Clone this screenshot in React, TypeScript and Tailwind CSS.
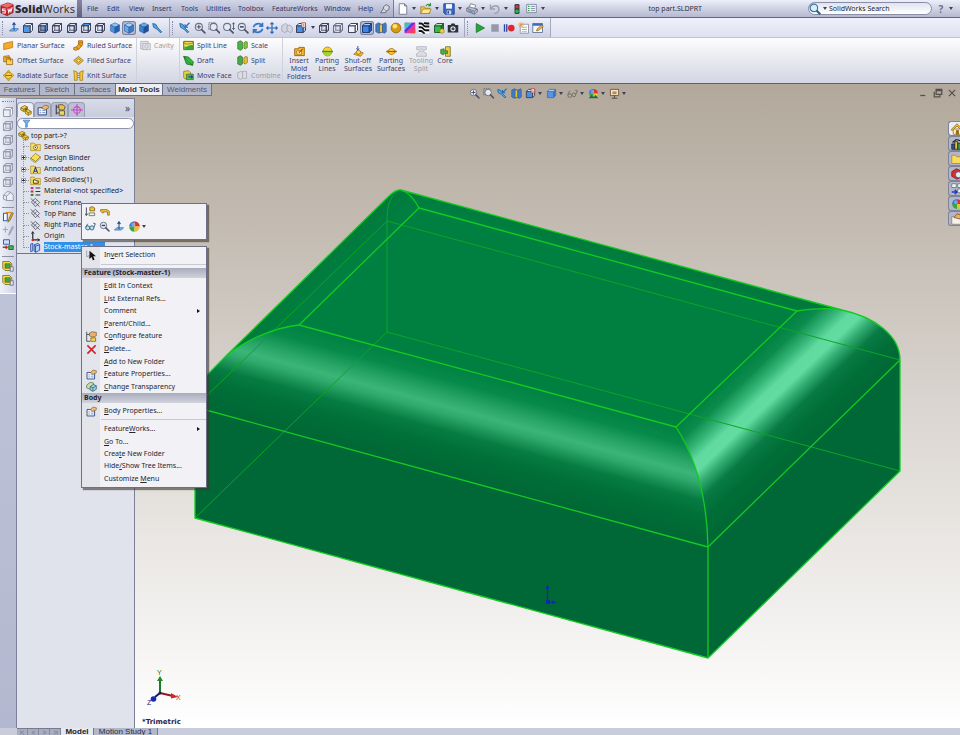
import { ReactNode } from 'react';
import clsx from 'clsx';

type CubeProps = {
  front?: string;
  top?: string;
  side?: string;
  stroke?: string;
  hidden?: boolean;
};

const Cube = ({ front = 'none', top = 'none', side = 'none', stroke = '#3b3f55', hidden }: CubeProps) => (
  <g stroke={stroke} strokeWidth="1.3" strokeLinejoin="round">
    <path d="M2 5h9v9H2z" fill={front} />
    <path d="M2 5l3-3h9l-3 3z" fill={top} />
    <path d="M11 5l3-3v9l-3 3z" fill={side} />
    {hidden && <path d="M5 2v9h9M5 11l-3 3" fill="none" strokeWidth="1" />}
  </g>
);

const IsoCube = ({ light = '#8cc4f5', mid = '#4f93dc', dark = '#2360b0' }) => (
  <g stroke="#27538f" strokeWidth="0.7" strokeLinejoin="round">
    <path d="M8 1l6 3-6 3-6-3z" fill={light} />
    <path d="M2 4l6 3v8l-6-3z" fill={mid} />
    <path d="M14 4L8 7v8l6-3z" fill={dark} />
  </g>
);

const Magnifier = ({ x = 6.5, children }: { x?: number; children?: ReactNode }) => (
  <g>
    <circle cx={x} cy="6.5" r="4.7" fill="#e6eaf2" stroke="#6c7386" strokeWidth="1.4" />
    <path d={`M${x + 3.5} 10l4.5 4.5`} stroke="#4b5266" strokeWidth="2.2" strokeLinecap="round" />
    {children}
  </g>
);

const Folder = () => (
  <path d="M1 3h5l1.500 2H15v9H1z" fill="#f7dc62" stroke="#a8871c" strokeWidth="1" />
);

const Ball = () => (
  <g>
    <path d="M8 8V1.500A6.500 6.500 0 0 0 1.500 8z" fill="#3570d8" />
    <path d="M8 8V1.500A6.500 6.500 0 0 1 14.500 8z" fill="#d8352e" />
    <path d="M8 8v6.500A6.500 6.500 0 0 1 1.500 8z" fill="#35a843" />
    <path d="M8 8v6.500A6.500 6.500 0 0 0 14.500 8z" fill="#e9c234" />
    <circle cx="6.500" cy="5.500" r="2.500" fill="#fff" opacity=".35" />
  </g>
);

const Card = () => (
  <g>
    <path d="M1.500 5h11v9.500h-11z" fill="#f4f6fb" stroke="#2f4a7c" strokeWidth="1.300" />
    <path d="M3.500 8.500h2M3.500 11.500h2M7 8.500h4M7 11.500h4" stroke="#4a74b8" />
    <path d="M6 5.500l4-4 5 1v3l-4 2z" fill="#edb87a" stroke="#7c4f22" strokeWidth=".8" />
  </g>
);

const Part = () => (
  <g stroke="#6b5410" strokeWidth=".9" strokeLinejoin="round">
    <path d="M1 5l5-3 4 2v3l5 3v3l-4 2-4-2.500V9L5 10 1 8z" fill="#f5d13d" />
    <path d="M1 5l4 2v3M5 7l5-3M10 7l-3 2 4 2.500V15M11 11.500l4-1.500" fill="none" />
    <ellipse cx="8" cy="7" rx="1.500" ry="1" fill="#6b5410" />
  </g>
);

const Plane = () => (
  <g fill="none" stroke="#474b5c" strokeWidth="1.100">
    <path d="M2 7l6-5 6 6-6 6z" />
    <path d="M1 2l13 12M5 10l5-5" />
  </g>
);

const Wrench = () => (
  <path d="M1 2l4 1 3 5 5 5-1.500 1.500-5-5L2 7z" fill="#4ca6e8" stroke="#235788" strokeWidth="1" />
);

const NormalTo = () => (
  <g>
    <path d="M2 12l3-3h9l-3 3z" fill="#8cc2f2" stroke="#2f67a8" />
    <path d="M8 11V2M6 4l2-3 2 3" fill="none" stroke="#1c4d94" strokeWidth="1.400" />
  </g>
);

const MoldPart = ({ color, accent }: { color: string; accent: string }) => (
  <g stroke="#4a4a18" strokeWidth=".8" strokeLinejoin="round">
    <path d="M1 3l4-2 3 2v10l-3 2-4-2z" fill={color} />
    <path d="M10 4l3-2 2 1v8l-3 2-2-1z" fill={accent} />
  </g>
);

const icons: Record<string, ReactNode> = {
  pin: (
    <g fill="#d7dae4" stroke="#585d72" strokeWidth="1.300">
      <path d="M6 4l4-3 5 3-1 5-4 2-5-3z" />
      <path d="M5 8l-4 6h8l1-3" />
    </g>
  ),
  newDoc: <path d="M3 1h7l3 3v11H3zM10 1v3h3" fill="#fff" stroke="#5e6478" strokeWidth="1" />,
  open: (
    <g stroke="#9a7413" strokeWidth=".9">
      <path d="M1 5h5l1 2h6v7H1z" fill="#f3c947" />
      <path d="M1 14l3-6h11l-3 6z" fill="#ffe792" />
      <path d="M8 4c2-3 4-3 6-1M14 0v3.500h-3" fill="none" stroke="#2c9b35" strokeWidth="1.500" />
    </g>
  ),
  save: (
    <g>
      <path d="M1 1h14v14H3l-2-2z" fill="#3567c9" stroke="#1c3c85" />
      <path d="M4 1.500h8v6H4z" fill="#f5f7fc" />
      <path d="M5 10h6v5H5z" fill="#cfd6e6" />
      <path d="M6 11h2v3H6z" fill="#1c3c85" />
    </g>
  ),
  print: (
    <g stroke="#555b6c" strokeWidth=".9">
      <path d="M4 7l2-6 7 2-2 5z" fill="#fff" />
      <path d="M1 7l3-2 11 3v4l-4 3-10-4z" fill="#bcc1cf" />
      <path d="M1 7l10 4v4M11 11l4-3" fill="none" />
      <path d="M3 10l6 2.500" stroke="#4f86c7" strokeWidth="1.500" />
    </g>
  ),
  undo: <path d="M2 2v6h6M2.500 7.500C5 3 12 2 13 7s-3 7-6 7" fill="none" stroke="#9da1b1" strokeWidth="2" />,
  light: (
    <g>
      <rect x="4" y="0" width="8" height="16" rx="2" fill="#3d4148" />
      <circle cx="8" cy="4" r="2.500" fill="#e0352a" />
      <circle cx="8" cy="11.500" r="2.700" fill="#27bd3c" />
    </g>
  ),
  options: (
    <g>
      <path d="M1 2h14v12H1z" fill="#eef3f8" stroke="#5d6f86" />
      <path d="M3 5h2M3 8h2M3 11h2" stroke="#2b9b44" strokeWidth="1.800" />
      <path d="M7 5h6M7 8h6M7 11h6" stroke="#5d6f86" />
    </g>
  ),
  normalTo: <NormalTo />,
  front: <Cube front="#4c98ec" top="#f4f7fc" side="#f4f7fc" />,
  back: <Cube top="#d7dce8" side="#5b87c3" front="#7d9cc9" hidden />,
  left: <Cube side="#f4f7fc" hidden />,
  right: <Cube side="#6eaef0" hidden />,
  top: <Cube top="#4c98ec" hidden />,
  bottom: <Cube front="#e3ebf8" hidden />,
  iso: <IsoCube />,
  trimetric: <IsoCube light="#a7d4fb" mid="#6aa9e8" dark="#397cc8" />,
  dimetric: <IsoCube light="#68aae8" mid="#3e7fca" dark="#1d5096" />,
  wrench: <Wrench />,
  prevView: (
    <g>
      <Wrench />
      <path d="M14 1L8 7M8 3v4h4" stroke="#2a67b0" strokeWidth="1.500" fill="none" />
    </g>
  ),
  zoomFit: (
    <Magnifier>
      <path d="M6.500 3.500v6M3.500 6.500h6" stroke="#394052" strokeWidth="1.200" />
    </Magnifier>
  ),
  zoomArea: (
    <g>
      <path d="M1 1h9v9H1z" fill="none" stroke="#555b70" strokeDasharray="2 1" />
      <Magnifier x={7.5} />
    </g>
  ),
  zoomInOut: (
    <g>
      <Magnifier x={5.5} />
      <path d="M14 1v9M12.500 3L14 1l1.500 2M12.500 8l1.500 2 1.500-2" stroke="#3c4256" fill="none" />
    </g>
  ),
  zoomSel: (
    <Magnifier>
      <path d="M4 6.500h5" stroke="#3c4256" strokeWidth="2" />
    </Magnifier>
  ),
  rotate: (
    <g fill="none" stroke="#2f76c4" strokeWidth="2.200">
      <path d="M2 7c1-5 8-6 11-3M14 1v4.500H9.500" />
      <path d="M14 9c-1 5-8 6-11 3M2 15v-4.500h4.500" />
    </g>
  ),
  pan: (
    <path
      d="M8 1v14M1 8h14M6 3l2-2 2 2M6 13l2 2 2-2M3 6L1 8l2 2M13 6l2 2-2 2"
      fill="none"
      stroke="#2766b7"
      strokeWidth="1.500"
    />
  ),
  rollGray: (
    <g fill="#d3d6e0" stroke="#9a9eae">
      <path d="M1 5l5-3 3 2v8l-4 2-4-2z" />
      <path d="M8 5l4-1 3 3v6l-3 1-4-3z" />
    </g>
  ),
  orient: (
    <g>
      <Cube front="#4c8ee0" top="#e8eef8" side="#b9cdec" />
      <path d="M9 1h5v6H9z" fill="#fff" stroke="#a13d31" />
      <path d="M10.500 3h2M10.500 5h2" stroke="#c0392b" />
    </g>
  ),
  wire: <Cube hidden />,
  wireHidden: <Cube hidden stroke="#686d80" />,
  noHidden: <Cube front="#eef0f8" top="#fff" side="#fff" />,
  shadedEdges: <Cube front="#3f86e4" top="#a8d0f8" side="#245db2" stroke="#1b3c78" />,
  shaded: <Cube front="#5b94dd" top="#b9d6f6" side="#3f72bd" stroke="#4873ae" />,
  section: (
    <g stroke="#365074" strokeWidth=".8">
      <path d="M1 3l4-2 3 2v11l-3 1-4-2z" fill="#3b7dcc" />
      <path d="M6 3h4v11H6z" fill="#f1c12f" />
      <path d="M10 3l4-2 1 2v10l-2 2-3-1z" fill="#3b7dcc" />
    </g>
  ),
  gold: (
    <g>
      <circle cx="8" cy="8" r="6.500" fill="#d69a10" stroke="#8b5f07" />
      <circle cx="6.500" cy="5.500" r="3" fill="#ffe27a" />
    </g>
  ),
  rainbow: (
    <g>
      <path d="M1 1h14v14H1z" fill="#e9369f" />
      <path d="M1 1h10L1 11z" fill="#2ec2ee" />
      <path d="M11 1h4L1 15v-4z" fill="#4a3be0" />
      <path d="M1 1h5L1 6z" fill="#36d35b" />
      <path d="M15 9v6H9z" fill="#f04a33" />
    </g>
  ),
  zebra: (
    <g>
      <path d="M1 1h14v14H1z" fill="#fff" />
      <path
        d="M1 2h3c3 0 3 4 6 4h5M1 7h3c3 0 3 4 6 4h5M8 1c1 1 2 1 7 1M1 12h3c2 0 3 3 5 3"
        fill="none"
        stroke="#111"
        strokeWidth="2.400"
      />
    </g>
  ),
  realView: (
    <g>
      <Cube front="#3fb64b" top="#b0e7b2" side="#1f8230" stroke="#205d2b" />
      <circle cx="12" cy="12" r="3" fill="#f3d03e" stroke="#8b7315" strokeWidth=".8" />
    </g>
  ),
  camera: (
    <g>
      <path d="M1 4h4l1-2h4l1 2h4v10H1z" fill="#2f3238" />
      <circle cx="8" cy="9" r="3.500" fill="#dfe4ec" />
      <circle cx="8" cy="9" r="2" fill="#454b57" />
    </g>
  ),
  play: <path d="M3 2l11 6-11 6z" fill="#27a53a" stroke="#12701f" />,
  stop: <path d="M3 3h10v10H3z" fill="#9599a8" />,
  record: (
    <g>
      <path d="M2 3v10M5 3v10" stroke="#2849a5" strokeWidth="1.800" />
      <circle cx="11" cy="8" r="4.500" fill="#e3262a" />
    </g>
  ),
  newMacro: (
    <g>
      <path d="M3 3h11v12H3z" fill="#fff" stroke="#7a8295" />
      <path d="M5 7h7M5 10h7M5 13h7" stroke="#8c95a8" />
      <path d="M4 0v8M0 4h8M1 1l6 6M7 1L1 7" stroke="#ef9d24" strokeWidth="1" />
    </g>
  ),
  editMacro: (
    <g>
      <path d="M1 2h13v12H1z" fill="#f5f7fb" stroke="#49608a" />
      <path d="M1 2h13v3H1z" fill="#3d6cc0" />
      <path d="M6 12l1-3 6-5 2 2-6 5z" fill="#f0bb41" stroke="#6d5218" strokeWidth=".8" />
    </g>
  ),
  planar: <path d="M1 5l13-3v9L1 14z" fill="#f7a928" stroke="#b56e0b" />,
  offset: (
    <g stroke="#8c5606">
      <path d="M1 2l8-1v8l-8 1z" fill="#f5b338" />
      <path d="M5 6h9v8H5z" fill="#ffd34f" />
      <path d="M3 4l8 0v5" fill="none" />
    </g>
  ),
  radiate: (
    <g stroke="#a9790c" strokeWidth=".8">
      <path d="M8 0l3 4H5zM8 16l3-4H5zM0 8l4-3v6zM16 8l-4-3v6z" fill="#f2b32c" />
      <circle cx="8" cy="8" r="4.500" fill="#fbd33e" />
      <path d="M3.500 8h9" stroke="#c25b12" strokeWidth="1.500" />
    </g>
  ),
  ruled: <path d="M1 11l4-1 3-4V1h6v6l-5 6-5 2-3-1zM5 10l3 4M8 6l5 3M8 4h6" fill="#f5a31e" stroke="#985709" />,
  filled: (
    <g stroke="#7d5a0c">
      <path d="M1 8l7-6 7 6-7 6z" fill="#f6c032" />
      <path d="M5 8l3-2.500L11 8l-3 2.500z" fill="#fff0a0" />
    </g>
  ),
  knit: <path d="M1 1l5 2v12H2V7zM15 1l-5 2v12h4V7zM6 5h4M6 8h4M6 11h4" fill="#fbca35" stroke="#9c7209" />,
  cavity: (
    <g fill="#e3e4ea" stroke="#a4a6b0">
      <path d="M1 2h11v11H1z" />
      <path d="M4 5h11v9H4z" />
      <circle cx="9.500" cy="9.500" r="2.500" />
    </g>
  ),
  splitLine: (
    <g>
      <path d="M1 2h14v12H1z" fill="#f4dd4a" stroke="#6a6317" strokeWidth="1.400" />
      <path d="M2 9c4 3 8-4 13-1v5.500H2z" fill="#36a63b" />
      <path d="M1 4c4 3 8 2 14 0" fill="none" stroke="#6a6317" />
    </g>
  ),
  draft: <path d="M1 2l7 1 7 7-1 5-9-2zM1 2l5 6 8 7" fill="#35b83e" stroke="#176c20" strokeWidth="1.200" />,
  moveFace: (
    <g strokeWidth=".9">
      <path d="M1 2l7-1 3 3v8l-8 1-2-2z" fill="#f2d03c" stroke="#6e5f12" />
      <path d="M5 6h10v8H5z" fill="#4fba50" stroke="#1f6425" />
      <path d="M8 10h6M12 8l2 2-2 2" stroke="#1f3fa5" strokeWidth="1.500" fill="none" />
    </g>
  ),
  scale: <MoldPart color="#3dbb46" accent="#7ccd37" />,
  split: <MoldPart color="#3dae46" accent="#f0c42f" />,
  combine: (
    <g fill="#dadce3" stroke="#9fa2ad">
      <path d="M1 4l5-2 3 2v7l-4 3-4-3z" />
      <path d="M8 2h6v10H8z" />
    </g>
  ),
  moldFolder: (
    <g>
      <path d="M1 4h6V2h8v12H1z" fill="#f8b932" stroke="#9a6206" strokeWidth="1.300" />
      <path d="M4 7h7v5H4z" fill="#fff2ba" stroke="#9a6206" />
      <path d="M7 10l6-6" stroke="#a33c12" strokeWidth="1.500" />
    </g>
  ),
  partingLines: (
    <g>
      <circle cx="8" cy="8" r="6.500" fill="#f6d32f" stroke="#8c7c10" />
      <path d="M2 8a6 6 0 0 0 12 0z" fill="#a9d23a" />
      <path d="M0 8h16" stroke="#3c9c19" strokeWidth="2" />
    </g>
  ),
  shutOff: (
    <g stroke="#7c5a0c" strokeWidth=".9">
      <path d="M1 12l6-5 8 3-4 5z" fill="#f6b52f" />
      <circle cx="8" cy="9" r="3" fill="#ffd956" />
      <path d="M7 0v5M5 3.500L7 6l2-2.500" stroke="#2c449b" strokeWidth="1.300" fill="none" />
    </g>
  ),
  partingSurf: (
    <g stroke="#9a650c" strokeWidth=".9">
      <path d="M0 8l8-4 8 4-8 4z" fill="#f59f25" />
      <circle cx="8" cy="8" r="4.500" fill="#fbcf3c" />
      <path d="M2 8h12" stroke="#b4520d" strokeWidth="1.600" />
    </g>
  ),
  toolingSplit: (
    <g fill="#dcdde3" stroke="#a6a8b2">
      <path d="M1 1h14v4l-4 1-3-2-3 2-4-1z" />
      <path d="M1 15v-4l4-3 3-1 3 1 4 3v4z" />
    </g>
  ),
  core: (
    <g stroke="#4b5413" strokeWidth=".9">
      <path d="M8 1h7v14H8z" fill="#f4cb35" />
      <path d="M1 5l5-1v3h5v4H5v2l-4-2z" fill="#41b444" />
    </g>
  ),
  part: <Part />,
  card: <Card />,
  config: (
    <g>
      <path d="M3 1v13M3 4h4M3 12h4" stroke="#3d4250" strokeWidth="1.500" />
      <path d="M6 1h6l3 3-2 4H7z" fill="#eac14b" stroke="#3d3410" strokeWidth=".9" />
      <path d="M7 9h7v6H7z" fill="#efd56e" stroke="#3d3410" strokeWidth=".9" />
    </g>
  ),
  target: (
    <g fill="none" stroke="#c843c8" strokeWidth="1.400">
      <circle cx="8" cy="8" r="4.500" />
      <path d="M8 0v16M0 8h16" />
    </g>
  ),
  filter: <path d="M2 2h12L9.500 8v6l-3 1V8z" fill="#6bb7ee" stroke="#2366a6" />,
  sensors: (
    <g>
      <Folder />
      <circle cx="8" cy="9.500" r="3" fill="#fff6c8" stroke="#5c5226" />
      <circle cx="8" cy="9.500" r="1" fill="#4a4326" />
    </g>
  ),
  binder: (
    <g stroke="#7a640f" strokeWidth=".9">
      <path d="M1 9l7-7 7 5-7 7z" fill="#f8df4c" />
      <path d="M1 9v2l7 5 7-7V7l-7 7z" fill="#f8f8f2" />
    </g>
  ),
  annotations: (
    <g>
      <Folder />
      <path d="M5 13l3-8 3 8M6 10.500h4" fill="none" stroke="#1d3a94" strokeWidth="1.500" />
    </g>
  ),
  bodies: (
    <g>
      <Folder />
      <path d="M5 7h3l1 1.500h3V12H5z" fill="#fff3a8" stroke="#262310" strokeWidth="1.200" />
    </g>
  ),
  material: (
    <g strokeWidth="3">
      <path d="M1 3h4" stroke="#b632a2" />
      <path d="M1 8h4" stroke="#d32f2f" />
      <path d="M1 13h4" stroke="#2a8c3b" />
      <path d="M8 3h7M8 8h7M8 13h7" stroke="#30333f" strokeWidth="1.600" />
    </g>
  ),
  plane: <Plane />,
  origin: (
    <g fill="none" strokeWidth="1.700">
      <path d="M4 1v12h10" stroke="#26262e" />
      <path d="M2 4l2-3 2 3M11 11l3 2-3 2" stroke="#26262e" strokeWidth="1.200" />
      <circle cx="4" cy="13" r="1.800" fill="#d32323" stroke="none" />
    </g>
  ),
  stock: (
    <g fill="#b8d3f8" stroke="#1d45a0" strokeWidth="1.200">
      <path d="M1 3l3-1v11l-3 1z" />
      <path d="M6 4l6-2 2 2v8l-6 3-2-2z" />
      <path d="M8 6v9M8 6l6-2M8 6L6 4" fill="none" />
    </g>
  ),
  openPart: (
    <g>
      <path d="M2 2v11M0 11l2 3 2-3" stroke="#30343f" strokeWidth="1.200" fill="none" />
      <path d="M7 2l4-1 3 2v4H7z" fill="#f3c33a" stroke="#614a0c" />
      <path d="M6 10h8v4H6z" fill="#f4f1e6" stroke="#55513f" />
    </g>
  ),
  rollback: <path d="M1 4h10l4 3v6h-3V8H5v2L1 7z" fill="#f1bb33" stroke="#7c5c0f" />,
  glasses: (
    <g fill="#bfe3f1" stroke="#2b6278" strokeWidth="1.300">
      <circle cx="4" cy="10" r="3" />
      <circle cx="10" cy="10" r="3" />
      <path d="M1 9l3-5M13 9l2-5-3-1" fill="none" />
    </g>
  ),
  glassesGray: (
    <g fill="none" stroke="#6f6c6a" strokeWidth="1.300">
      <circle cx="4" cy="11" r="2.700" />
      <circle cx="10" cy="10" r="2.700" />
      <path d="M1 10l3-6M13 9l2-5-3-1" />
    </g>
  ),
  ball: <Ball />,
  scene: (
    <g>
      <Ball />
      <path d="M1 15l4-5 3 3 3-3 4 5z" fill="#2d6a34" />
    </g>
  ),
  viewSettings: (
    <g>
      <path d="M2 2h12v9H2z" fill="#f1e4c8" stroke="#6e5534" strokeWidth="1.300" />
      <path d="M5 5h6v4H5z" fill="#b98a55" />
      <path d="M8 11v4M4 15h8" stroke="#55504c" strokeWidth="1.500" />
    </g>
  ),
  cursor: (
    <g>
      <path d="M1 1v9l3-2 1 4" fill="none" stroke="#888b96" />
      <path d="M5 1v12l3-3 2 5 2.500-1-2-5h4z" fill="#111" />
    </g>
  ),
  remove: <path d="M2 2l12 12M14 2L2 14" stroke="#d6202a" strokeWidth="2.200" />,
  configure: (
    <g>
      <path d="M1 1v14h5M1 5h4" fill="none" stroke="#454955" strokeWidth="1.300" />
      <path d="M5 3l4-2 6 1v5l-5 2-5-2z" fill="#eab16e" stroke="#6e441b" strokeWidth=".9" />
      <path d="M7 10h7v5H7z" fill="#f4dc57" stroke="#5f5312" />
    </g>
  ),
  transparency: (
    <g strokeWidth="1.100">
      <path d="M1 6l5-4 5 1v6l-5 3-5-2z" fill="#cfdcae" stroke="#59733a" />
      <path d="M6 8l5-3 4 2v5l-5 3-4-2z" fill="#9cd2df" stroke="#2f6474" />
      <path d="M6 8l4 2v5M10 10l5-3" fill="none" stroke="#2f6474" />
    </g>
  ),
  house: (
    <g stroke="#8c6710" strokeWidth="1">
      <path d="M3 8h10v7H3z" fill="#fdf5c8" />
      <path d="M0 9l8-8 8 8-2 1-6-6-6 6z" fill="#f3bf37" />
      <path d="M7 10h3v5H7z" fill="#9d5a25" />
    </g>
  ),
  library: (
    <g>
      <path d="M1 8h4v7H1z" fill="#2e54a8" stroke="#171c2b" />
      <path d="M5 5h4v10H5z" fill="#e6c333" stroke="#171c2b" />
      <path d="M9 7h5v8H9z" fill="#3a9c4b" stroke="#171c2b" />
      <path d="M2 6l5-4 7 2" fill="none" stroke="#171c2b" strokeWidth="1.500" />
    </g>
  ),
  folder: <Folder />,
  search3d: (
    <g>
      <path d="M1 5l6-4 7 3v8l-6 3-7-4z" fill="#d5312f" stroke="#7e1515" />
      <circle cx="10" cy="9" r="4" fill="#e4ecf6" stroke="#49506a" />
    </g>
  ),
  palette: (
    <g>
      <path d="M1 1h6v5H1zM9 1h6v5H9zM9 8h6v5H9z" fill="#f2f5f8" stroke="#56705f" />
      <path d="M1 12h7M5 9l3 3-3 3" stroke="#1f3ac2" strokeWidth="1.800" fill="none" />
    </g>
  ),
  props: (
    <g>
      <path d="M1 5h13v10H1z" fill="#f5f3ec" stroke="#827a6d" />
      <path d="M4 6l4-5 6 2-2 5z" fill="#eab068" stroke="#7a4c1c" />
    </g>
  ),
  grayCube: <Cube front="#eceef5" top="#fff" side="#fff" stroke="#9699a9" />,
  grayWire: <Cube hidden stroke="#9699a9" />,
  grayPart: <path d="M2 7l5-5 5 1 3 4v7H6l-4-2zM6 14V8l6-5M6 8L2 7" fill="#eceef5" stroke="#9699a9" strokeWidth="1.300" />,
  sketch: (
    <g>
      <path d="M2 3h5v10H2z" fill="#fff" stroke="#3461b6" strokeWidth="1.400" />
      <path d="M8 15l1-4 4-9 2 1-4 9z" fill="#f2b32d" stroke="#805a10" />
      <path d="M5 2l7 0" stroke="#e08a1b" strokeWidth="1.500" />
    </g>
  ),
  pencilGray: <path d="M1 6h7M4.500 2v8M9 14l1-4 4-8 1 1-4 8z" fill="none" stroke="#a3a6b4" strokeWidth="1.400" />,
  mates: (
    <g strokeWidth="1.200">
      <path d="M2 1h8v6H2z" fill="#cfe2fa" stroke="#2950a4" />
      <path d="M1 11h6M5 9l2 2-2 2" fill="none" stroke="#c22d2d" strokeWidth="1.700" />
      <path d="M9 9h6v5H9z" fill="#44b54e" stroke="#1d6527" />
    </g>
  ),
  yellowBlock: (
    <g stroke="#6d6414" strokeWidth="1">
      <path d="M1 2h9l3 3v9H4l-3-3z" fill="#f2e04b" />
      <path d="M4 5h7v6H4z" fill="#3fa646" />
      <path d="M11 9h4v6h-4z" fill="#dfe2ee" stroke="#626880" />
    </g>
  ),
};

const Icon = ({ name, className = 'size-3' }: { name: string; className?: string }) => (
  <svg viewBox="0 0 16 16" className={clsx('shrink-0', className)} aria-hidden="true">
    {icons[name]}
  </svg>
);

const Caret = () => (
  <svg viewBox="0 0 4 3" className="h-[3px] w-1 shrink-0" aria-hidden="true">
    <path d="M0 0h4L2 3z" fill="#3c4258" />
  </svg>
);

// "&" marks the access key of a label
const Label = ({ text }: { text: string }) => {
  const at = text.indexOf('&');
  if (at < 0) return <span>{text}</span>;
  return (
    <span>
      {text.slice(0, at)}
      <u>{text[at + 1]}</u>
      {text.slice(at + 2)}
    </span>
  );
};

const menus = [
  { label: 'File', width: 'w-[20px]' },
  { label: 'Edit', width: 'w-[22px]' },
  { label: 'View', width: 'w-[23px]' },
  { label: 'Insert', width: 'w-[29px]' },
  { label: 'Tools', width: 'w-[25px]' },
  { label: 'Utilities', width: 'w-[32px]' },
  { label: 'Toolbox', width: 'w-[34px]' },
  { label: 'FeatureWorks', width: 'w-[52px]' },
  { label: 'Window', width: 'w-[34px]' },
  { label: 'Help', width: 'w-[22px]' },
];

const quickAccess = ['newDoc', 'open', 'save', 'print', 'undo'];

const viewTools = ['normalTo', 'front', 'back', 'left', 'right', 'top', 'bottom', 'iso', 'trimetric', 'dimetric', 'wrench'];
const zoomTools = ['prevView', 'zoomFit', 'zoomArea', 'zoomInOut', 'zoomSel', 'rotate', 'pan', 'rollGray', 'orient'];
const displayTools = ['wire', 'wireHidden', 'noHidden', 'shadedEdges', 'section', 'gold', 'rainbow', 'zebra', 'realView', 'camera'];
const macroTools = ['play', 'stop', 'record', 'newMacro', 'editMacro'];

const ribbonColumns = [
  {
    width: 'w-[67px]',
    items: [
      { icon: 'planar', label: 'Planar Surface' },
      { icon: 'offset', label: 'Offset Surface' },
      { icon: 'radiate', label: 'Radiate Surface' },
    ],
  },
  {
    width: 'w-[64px]',
    divider: true,
    items: [
      { icon: 'ruled', label: 'Ruled Surface' },
      { icon: 'filled', label: 'Filled Surface' },
      { icon: 'knit', label: 'Knit Surface' },
    ],
  },
  { width: 'w-[40px]', divider: true, items: [{ icon: 'cavity', label: 'Cavity', disabled: true }] },
  {
    width: 'w-[51px]',
    items: [
      { icon: 'splitLine', label: 'Split Line' },
      { icon: 'draft', label: 'Draft' },
      { icon: 'moveFace', label: 'Move Face' },
    ],
  },
  {
    width: 'w-[46px]',
    divider: true,
    items: [
      { icon: 'scale', label: 'Scale' },
      { icon: 'split', label: 'Split' },
      { icon: 'combine', label: 'Combine', disabled: true },
    ],
  },
];

const moldTools = [
  { icon: 'moldFolder', label: 'Insert Mold Folders', width: 'w-[26px]' },
  { icon: 'partingLines', label: 'Parting Lines', width: 'w-[28px]' },
  { icon: 'shutOff', label: 'Shut-off Surfaces', width: 'w-[32px]' },
  { icon: 'partingSurf', label: 'Parting Surfaces', width: 'w-[32px]' },
  { icon: 'toolingSplit', label: 'Tooling Split', width: 'w-[26px]', disabled: true },
  { icon: 'core', label: 'Core', width: 'w-[20px]' },
];

const tabs = [
  { label: 'Features', width: 'w-[40px]' },
  { label: 'Sketch', width: 'w-[35px]' },
  { label: 'Surfaces', width: 'w-[41px]' },
  { label: 'Mold Tools', width: 'w-[47px]', active: true },
  { label: 'Weldments', width: 'w-[49px]' },
];

const sideTools = [
  ['grayCube', 'grayWire', 'grayWire', 'grayWire', 'grayWire', 'grayWire', 'grayPart'],
  ['sketch', 'pencilGray', 'mates'],
  ['yellowBlock', 'yellowBlock'],
];

const tree = [
  { icon: 'sensors', label: 'Sensors' },
  { icon: 'binder', label: 'Design Binder', expandable: true },
  { icon: 'annotations', label: 'Annotations', expandable: true },
  { icon: 'bodies', label: 'Solid Bodies(1)', expandable: true },
  { icon: 'material', label: 'Material <not specified>' },
  { icon: 'plane', label: 'Front Plane' },
  { icon: 'plane', label: 'Top Plane' },
  { icon: 'plane', label: 'Right Plane' },
  { icon: 'origin', label: 'Origin' },
  { icon: 'stock', label: 'Stock-master-1', selected: true },
];

const headsUp = [
  { icon: 'zoomFit' },
  { icon: 'zoomArea' },
  { icon: 'prevView' },
  { icon: 'section' },
  { icon: 'orient', menu: true },
  { icon: 'shaded', menu: true },
  { icon: 'glassesGray', menu: true },
  { icon: 'scene', menu: true },
  { icon: 'viewSettings', menu: true },
];

const taskPane = ['house', 'library', 'folder', 'search3d', 'palette', 'ball', 'props'];

type MenuEntry = { label: string; icon?: string; submenu?: boolean };

const featureMenu: MenuEntry[] = [
  { label: '&Edit In Context' },
  { label: '&List External Refs...' },
  { label: 'Comment', submenu: true },
  { label: '&Parent/Child...' },
  { label: 'C&onfigure feature', icon: 'configure' },
  { label: '&Delete...', icon: 'remove' },
  { label: '&Add to New Folder' },
  { label: '&Feature Properties...', icon: 'card' },
  { label: '&Change Transparency', icon: 'transparency' },
];

const viewMenu: MenuEntry[] = [
  { label: 'Feature&Works...', submenu: true },
  { label: '&Go To...' },
  { label: 'Crea&te New Folder' },
  { label: 'Hide&/Show Tree Items...' },
  { label: 'Customize &Menu' },
];

function TitleBar() {
  return (
    <header className="flex h-[18px] items-center border-b border-[#63667c] bg-linear-to-b from-[#eceefa] to-[#b5b9cf] text-[#35355f]">
      <div className="flex w-[77px] items-center gap-px">
        <svg viewBox="0 0 16 16" className="size-[14px] shrink-0" aria-hidden="true">
          <path d="M1 4l8-3 6 2v9l-7 3.500-7-3z" fill="#c5202a" stroke="#7d1018" strokeWidth=".8" />
          <path d="M1 4l7 2.500 7-3.500-6-2z" fill="#ec6a6e" />
          <path d="M6.500 8H3v2h3v2.500H2.500M9 7.500l1 4.500 1.500-4 1 3 1.500-5" fill="none" stroke="#fff" strokeWidth="1.200" />
        </svg>
        <span className="font-['Open_Sans'] text-[11px] leading-none text-[#2c2c34]">
          <b className="font-extrabold">Solid</b>Works
        </span>
      </div>
      <div className="h-full w-[5px] bg-linear-to-b from-[#8487a4] to-[#5d6080]" />
      <nav className="flex h-full w-[312px] items-center border-r border-[#777b94] bg-linear-to-b from-[#d3d6e8] to-[#a9adc8] pl-[5px]">
        {menus.map(menu => (
          <button key={menu.label} className={clsx('text-left', menu.width)}>
            {menu.label}
          </button>
        ))}
        <button aria-label="Pin menu">
          <Icon name="pin" className="size-[10px]" />
        </button>
      </nav>
      <div className="flex items-center pl-[3px]">
        {quickAccess.map(name => (
          <button key={name} aria-label={name} className="flex w-[23px] items-center gap-[3px]">
            <Icon name={name} />
            <Caret />
          </button>
        ))}
        <button aria-label="Rebuild" className="w-[14px]">
          <Icon name="light" className="size-[10px]" />
        </button>
        <button aria-label="Options" className="flex items-center gap-1">
          <Icon name="options" className="size-[11px]" />
          <Caret />
        </button>
      </div>
      <h1 className="ml-auto pr-[106px] text-[#33333f]">top part.SLDPRT</h1>
      <label className="flex h-[13px] w-[124px] items-center gap-[2px] rounded-full border border-[#8b8fa6] bg-linear-to-b from-[#e1e4f0] to-white">
        <svg viewBox="0 0 16 16" className="size-3 shrink-0" aria-hidden="true">
          <circle cx="6.500" cy="6.500" r="5" fill="#d8effa" stroke="#37799c" strokeWidth="1.600" />
          <path d="M10 10l5 5" stroke="#2c6486" strokeWidth="2.800" />
        </svg>
        <Caret />
        <input
          aria-label="SolidWorks Search"
          defaultValue="SolidWorks Search"
          className="w-full min-w-0 bg-transparent text-[#1f1f28] outline-none"
        />
      </label>
      <button className="flex w-7 items-center justify-center gap-1.5">
        <b className="text-[10px] leading-none text-[#6c7088]">?</b>
        <Caret />
      </button>
    </header>
  );
}

function ToolGroup({ names, width, pressed }: { names: string[]; width: string; pressed?: string }) {
  return (
    <div className={clsx('flex shrink-0 justify-between', width)}>
      {names.map(name => (
        <button
          key={name}
          aria-label={name}
          className={clsx(
            'flex size-[14px] items-center justify-center',
            name === pressed && 'rounded-[3px] bg-[#b4bad2] ring-1 ring-[#7c819b] ring-inset'
          )}
        >
          <Icon name={name} />
        </button>
      ))}
    </div>
  );
}

const Grip = () => <div className="mx-[2px] h-[14px] border-l border-dotted border-[#8387a0]" />;

function Toolbar() {
  return (
    <div className="flex h-5 border-b border-[#bfc2d0] bg-linear-to-b from-[#f0f0fc] to-[#dfe1f1]">
      <div className="flex w-[551px] items-center border-r border-[#a4a8bd] bg-linear-to-b from-[#eef0fb] to-[#cdd1e4]">
        <Grip />
        <div className="w-[2px]" />
        <ToolGroup names={viewTools} width="w-[158px]" pressed="trimetric" />
        <div className="ml-[4px] h-full w-px bg-[#a4a8bd]" />
        <Grip />
        <div className="w-[3px]" />
        <ToolGroup names={zoomTools} width="w-[130px]" />
        <div className="flex w-[9px] justify-center">
          <Caret />
        </div>
        <ToolGroup names={displayTools} width="w-[143px]" pressed="shadedEdges" />
        <div className="ml-[4px] h-full w-px bg-[#a4a8bd]" />
        <Grip />
        <div className="w-[3px]" />
        <ToolGroup names={macroTools} width="w-[72px]" />
      </div>
    </div>
  );
}

function Ribbon() {
  return (
    <div className="flex h-[46px] border-b border-[#5c5f77] bg-linear-to-b from-[#fdfdfe] to-[#d3d6e3] pl-[3px] text-[#41416e]">
      {ribbonColumns.map((column, i) => (
        <div
          key={i}
          className={clsx('mr-[3px] flex flex-col', column.width, column.divider && 'border-r border-[#cfd1dc]')}
        >
          {column.items.map(item => (
            <button
              key={item.label}
              className={clsx('flex h-[15px] items-center gap-[3px] whitespace-nowrap', item.disabled && 'text-[#9b9ca6]')}
            >
              <Icon name={item.icon} className="size-[11px]" />
              {item.label}
            </button>
          ))}
        </div>
      ))}
      <div className="flex gap-[1px]">
        {moldTools.map(tool => (
          <button
            key={tool.label}
            className={clsx(
              'flex flex-col items-center pt-[8px] text-center leading-[8px]',
              tool.width,
              tool.disabled && 'text-[#9b9ca6]'
            )}
          >
            <Icon name={tool.icon} className="size-[11px]" />
            {tool.label}
          </button>
        ))}
      </div>
    </div>
  );
}

function CommandTabs() {
  return (
    <div className="flex h-[14px] items-start font-['Liberation_Sans'] text-[8px] leading-none">
      {tabs.map(tab => (
        <button
          key={tab.label}
          className={clsx(
            'h-3 border-r border-b border-[#6c7088]',
            tab.width,
            tab.active ? 'bg-[#eceef4] font-bold text-[#30303a]' : 'bg-[#b3b7ca] text-[#55586a]'
          )}
        >
          {tab.label}
        </button>
      ))}
    </div>
  );
}

function SideStrip() {
  return (
    <aside className="w-4 shrink-0 bg-linear-to-b from-[#c3c8dc] to-[#b3b8d0]">
      <div className="flex h-[196px] flex-col items-center border-b border-white bg-linear-to-r from-[#eef0fa] to-[#ced2e4] pt-[3px]">
        <div className="h-[4px] w-3 border-t border-dotted border-[#7c8099]" />
        {sideTools.map((group, i) => (
          <div key={i} className={clsx('flex flex-col items-center', i > 0 && 'mt-1 border-t border-[#8c90a6] pt-[2px]')}>
            {group.map((name, j) => (
              <button key={j} aria-label={name} className="flex h-[14px] w-3 items-center justify-center">
                <Icon name={name} />
              </button>
            ))}
          </div>
        ))}
      </div>
    </aside>
  );
}

function FeatureTree() {
  return (
    <section className="flex w-[119px] shrink-0 flex-col border-x border-t border-[#7b7f97] bg-[#e0e3ec] text-[#1d1d26]">
      <div className="flex h-[18px] items-end bg-linear-to-b from-[#d9dce8] to-[#c8ccdc]">
        {['part', 'card', 'config', 'target'].map((name, i) => (
          <button
            key={name}
            aria-label={name}
            className={clsx(
              'flex h-[15px] w-[17px] items-center justify-center rounded-t-sm border border-b-0 border-[#9a9eb4]',
              i === 0 ? 'bg-[#eceef5]' : 'bg-[#bcc0d2]'
            )}
          >
            <Icon name={name} />
          </button>
        ))}
        <span className="mr-1 mb-1 ml-auto text-[10px] text-[#44485e]">»</span>
      </div>
      <label className="mt-px flex h-[11px] items-center rounded-full border border-[#8f93ab] bg-white pl-1">
        <Icon name="filter" className="size-[9px]" />
        <input aria-label="Filter" className="w-full min-w-0 outline-none" />
      </label>
      <ul className="flex h-[125px] flex-col justify-between border-b border-[#4e7eb8] pt-px whitespace-nowrap">
        <li className="flex h-[11px] items-center gap-[2px] pl-px">
          <Icon name="part" className="size-[11px]" />
          top part-&gt;?
        </li>
        {tree.map(node => (
          <li key={node.label} className="relative flex h-[11px] items-center gap-[3px] pl-[13px]">
            <span className="absolute top-[5px] left-[6px] w-[6px] border-t border-dotted border-[#8d90a0]" />
            <span className="absolute -top-[5px] left-[6px] h-[11px] border-l border-dotted border-[#8d90a0]" />
            {node.expandable && (
              <button
                aria-label={`Expand ${node.label}`}
                className="absolute top-[3px] left-[4px] size-[5px] border border-[#a0a4b4] bg-white"
              >
                <svg viewBox="0 0 3 3" className="size-[3px]">
                  <path d="M1 0h1v3H1zM0 1h3v1H0z" fill="#2c2f3c" />
                </svg>
              </button>
            )}
            <Icon name={node.icon} className="size-[11px]" />
            <span className={clsx(node.selected && 'w-[61px] bg-[#3390ea] leading-[10px] text-white')}>{node.label}</span>
          </li>
        ))}
      </ul>
    </section>
  );
}

function Model() {
  return (
    <svg viewBox="135 98 825 630" preserveAspectRatio="xMinYMin meet" className="h-full w-full" aria-label="Part view">
      <defs>
        <linearGradient id="frontFillet" gradientUnits="userSpaceOnUse" x1="676" y1="427" x2="648" y2="530">
          <stop offset="0" stopColor="#008142" />
          <stop offset=".14" stopColor="#068a4a" />
          <stop offset=".3" stopColor="#2ca86a" />
          <stop offset=".38" stopColor="#3bb578" />
          <stop offset=".45" stopColor="#2fa96c" />
          <stop offset=".6" stopColor="#067c42" />
          <stop offset=".75" stopColor="#006f38" />
          <stop offset="1" stopColor="#006735" />
        </linearGradient>
        <linearGradient id="sideFillet" gradientUnits="userSpaceOnUse" x1="676" y1="427" x2="751" y2="506">
          <stop offset="0" stopColor="#008142" />
          <stop offset=".12" stopColor="#0c8c4c" />
          <stop offset=".24" stopColor="#35b478" />
          <stop offset=".34" stopColor="#60da9e" />
          <stop offset=".43" stopColor="#62dca0" />
          <stop offset=".52" stopColor="#34ae74" />
          <stop offset=".64" stopColor="#087a43" />
          <stop offset=".8" stopColor="#006d37" />
          <stop offset="1" stopColor="#006835" />
        </linearGradient>
        <linearGradient id="backFillet" gradientUnits="userSpaceOnUse" x1="600" y1="244" x2="595" y2="260">
          <stop offset="0" stopColor="#007a3c" />
          <stop offset="1" stopColor="#008040" />
        </linearGradient>
        <linearGradient id="leftFillet" gradientUnits="userSpaceOnUse" x1="300" y1="281" x2="318" y2="300">
          <stop offset="0" stopColor="#007a3c" />
          <stop offset="1" stopColor="#008040" />
        </linearGradient>
      </defs>

      <path
        d="M195 518V407Q198 385 207 375L227 355 388 197Q396 189 401 190L842 310C874 317 900 335 900 360V471L708 658z"
        fill="#006837"
      />
      <path d="M419 208L797 311 676 427 299 325z" fill="#008040" />
      <path d="M299 325C272 328 245 341 227 355L388 197Q396 189 401 190Q412 194 419 208z" fill="url(#leftFillet)" />
      <path d="M401 190L842 310Q825 308 797 311L419 208Q410 193 401 190z" fill="url(#backFillet)" />
      <path
        d="M299 325L676 427C694 455 707 495 708 547L195 407Q198 385 207 375L227 355C245 341 272 328 299 325z"
        fill="url(#frontFillet)"
      />
      <path d="M797 311Q825 307 842 310C874 317 900 335 900 360L708 547C707 495 694 455 676 427z" fill="url(#sideFillet)" />

      {/* edges seen through the body */}
      <g fill="none" stroke="#0ca526" strokeWidth="1">
        <path d="M195 407L387 221 900 360" />
        <path d="M195 518L387 332 900 471" />
        <path d="M387 332V221C387 204 391 195 399 190" />
      </g>
      <g fill="none" stroke="#12cb22" strokeWidth="1.300" strokeLinejoin="round">
        <path d="M195 518V407Q198 385 207 375L227 355 388 197Q396 189 401 190L842 310C874 317 900 335 900 360V471L708 658z" />
        <path d="M419 208L797 311 676 427 299 325z" />
        <path d="M401 190Q411 193 419 208M797 311Q825 307 842 310" />
        <path d="M299 325C272 328 245 341 227 355M195 407L708 547C707 495 694 455 676 427" />
        <path d="M708 658V547L900 360" />
      </g>

      <g fill="none" stroke="#0d27b4" strokeWidth="1.200">
        <path d="M547.500 602V586M546 589l1.500-3 1.500 3M546 602h8M552 601l3 1.500-3 1" />
        <path d="M546 600h4v4h-4z" fill="#0d27b4" stroke="none" />
      </g>
    </svg>
  );
}

function Triad() {
  return (
    <div className="absolute bottom-0 left-[6px] flex flex-col">
      <svg viewBox="0 0 44 40" className="h-10 w-11" aria-hidden="true">
        <path d="M19 25V12" stroke="#1c7a26" strokeWidth="2" />
        <path d="M16 13l3-5 3 5z" fill="#23882d" />
        <path d="M19 25l13 3" stroke="#8d1d1d" strokeWidth="2" />
        <path d="M30 25l7 4-7 1.500z" fill="#d02626" />
        <path d="M19 25l-5 4" stroke="#16166e" strokeWidth="2" />
        <circle cx="12.500" cy="31" r="2.800" fill="#1d24b8" />
        <circle cx="19" cy="25" r="1.500" fill="#20204a" />
        <g fontFamily="Liberation Sans" fontSize="7">
          <text x="16" y="7" fill="#2c7433">Y</text>
          <text x="35" y="32" fill="#d02626">X</text>
          <text x="6" y="37" fill="#1d2480">Z</text>
        </g>
      </svg>
      <span className="mt-2 ml-px font-['DejaVu_Sans'] leading-[12px] font-bold text-[#26264e]">*Trimetric</span>
    </div>
  );
}

function MenuItem({ label, icon, submenu }: MenuEntry) {
  return (
    <button className="flex w-full items-center text-left whitespace-nowrap">
      <span className="flex w-[18px] shrink-0 justify-center">{icon && <Icon name={icon} className="size-[11px]" />}</span>
      <span className="flex flex-1 items-center justify-between pr-[6px] pl-1">
        <Label text={label} />
        {submenu && (
          <svg viewBox="0 0 3 4" className="h-1 w-[3px]" aria-hidden="true">
            <path d="M0 0v4l3-2z" fill="#111" />
          </svg>
        )}
      </span>
    </button>
  );
}

const MenuHeader = ({ children }: { children: ReactNode }) => (
  <h2 className="h-[10px] bg-linear-to-b from-[#a9acbb] to-[#d0d2dc] pl-[2px] leading-[10px] font-bold text-[#22222c]">
    {children}
  </h2>
);

function ContextMenu() {
  return (
    <div className="absolute top-[119px] left-[81px] w-[126px] text-[#26262f]">
      <div className="flex h-[37px] flex-col gap-[3px] border border-[#6d7086] bg-[#f1f1f6] pt-[2px] pl-[3px] shadow-[2px_2px_1px_rgba(60,55,50,0.6)]">
        <div className="flex gap-1">
          <button aria-label="Open part"><Icon name="openPart" className="size-[11px]" /></button>
          <button aria-label="Rollback"><Icon name="rollback" className="size-[10px]" /></button>
        </div>
        <div className="flex items-center gap-[3px]">
          <button aria-label="Hide"><Icon name="glasses" className="size-[11px]" /></button>
          <button aria-label="Zoom to selection"><Icon name="zoomSel" className="size-[11px]" /></button>
          <button aria-label="Normal to"><Icon name="normalTo" /></button>
          <button aria-label="Appearance" className="flex items-center gap-px">
            <Icon name="ball" className="size-[13px]" />
            <Caret />
          </button>
        </div>
      </div>

      <div className="mt-[6px] border border-[#6d7086] bg-linear-to-r from-[#e4e5ea] from-[18px] to-[#f1f1f6] to-[18px] pb-[2px] shadow-[2px_2px_1px_rgba(60,55,50,0.6)]">
        <div className="grid h-[16px]">
          <MenuItem label="In&vert Selection" icon="cursor" />
        </div>
        <div className="mt-px mb-[3px] ml-[19px] h-px bg-[#c6c8d2]" />
        <MenuHeader>Feature (Stock-master-1)</MenuHeader>
        <div className="mt-[2px] grid h-[113px] auto-rows-fr">
          {featureMenu.map(entry => (
            <MenuItem key={entry.label} {...entry} />
          ))}
        </div>
        <MenuHeader>Body</MenuHeader>
        <div className="grid h-[16px]">
          <MenuItem label="&Body Properties..." icon="card" />
        </div>
        <div className="ml-[19px] h-px bg-[#c6c8d2]" />
        <div className="mt-[3px] grid h-[62px] auto-rows-fr">
          {viewMenu.map(entry => (
            <MenuItem key={entry.label} {...entry} />
          ))}
        </div>
      </div>
    </div>
  );
}

function StatusTabs() {
  return (
    <footer className="flex h-[7px] shrink-0 bg-[#c9ccda] pl-[17px] font-['Liberation_Sans'] text-[8px] leading-[7px]">
      <div className="flex border-t border-[#777b92] bg-[#a9adbf]">
        {['M5 1L1 3l4 2M0 0v6', 'M5 1L1 3l4 2', 'M1 1l4 2-4 2', 'M1 1l4 2-4 2M6 0v6'].map((path, i) => (
          <button
            key={path}
            aria-label={['First', 'Previous', 'Next', 'Last'][i]}
            className="flex w-[11px] items-center justify-center border-r border-[#8589a0]"
          >
            <svg viewBox="0 0 6 6" className="size-[5px]">
              <path d={path} fill="none" stroke="#7a7e94" />
            </svg>
          </button>
        ))}
      </div>
      <button className="w-[33px] border-r border-[#777b92] bg-[#e7e9f1] font-bold text-[#1d1d28]">Model</button>
      <button className="w-[64px] border-r border-[#777b92] bg-[#b3b7ca] text-[#2c2c3a]">Motion Study 1</button>
    </footer>
  );
}

function App() {
  return (
    <div className="flex h-screen flex-col overflow-hidden font-['Noto_Sans',sans-serif] text-[7px] leading-[10px]">
      <TitleBar />
      <Toolbar />
      <Ribbon />
      <main className="relative flex min-h-0 flex-1 flex-col bg-linear-to-b from-[#b2a89b] via-[#dad5d0] via-50% to-white">
        <CommandTabs />
        <div className="flex min-h-0 flex-1">
          <SideStrip />
          <FeatureTree />
          <div className="relative min-w-0 flex-1">
            <Model />
            <Triad />
          </div>
        </div>

        <div className="absolute top-1 right-0 left-[138px] flex items-center justify-center">
          {headsUp.map(tool => (
            <button key={tool.icon} aria-label={tool.icon} className={clsx('flex items-center gap-[2px]', tool.menu ? 'w-[21px]' : 'w-[14px]')}>
              <Icon name={tool.icon} className="size-[11px]" />
              {tool.menu && <Caret />}
            </button>
          ))}
        </div>
        <div className="absolute top-1 right-[3px] flex gap-1">
          {['M2 12h8', 'M5 2h9v8H5zM5 4h9M2 6v8h9v-3', 'M3 3l10 10M13 3L3 13'].map((path, i) => (
            <button key={path} aria-label={['Minimize', 'Restore', 'Close'][i]}>
              <svg viewBox="0 0 16 16" className="size-[10px]">
                <path d={path} fill="none" stroke="#55504c" strokeWidth="2" />
              </svg>
            </button>
          ))}
        </div>
        <div className="absolute top-[37px] right-0 w-3">
          {taskPane.map((name, i) => (
            <button
              key={name}
              aria-label={name}
              className={clsx(
                'flex h-[15px] w-full items-center overflow-hidden rounded-l-[3px] border border-r-0 border-[#7f8398] pl-[2px]',
                i === 0 ? 'bg-[#eceef5]' : 'bg-[#b2b6c8]'
              )}
            >
              <Icon name={name} className="size-3" />
            </button>
          ))}
        </div>
        <ContextMenu />
      </main>
      <StatusTabs />
    </div>
  );
}

export default App;
